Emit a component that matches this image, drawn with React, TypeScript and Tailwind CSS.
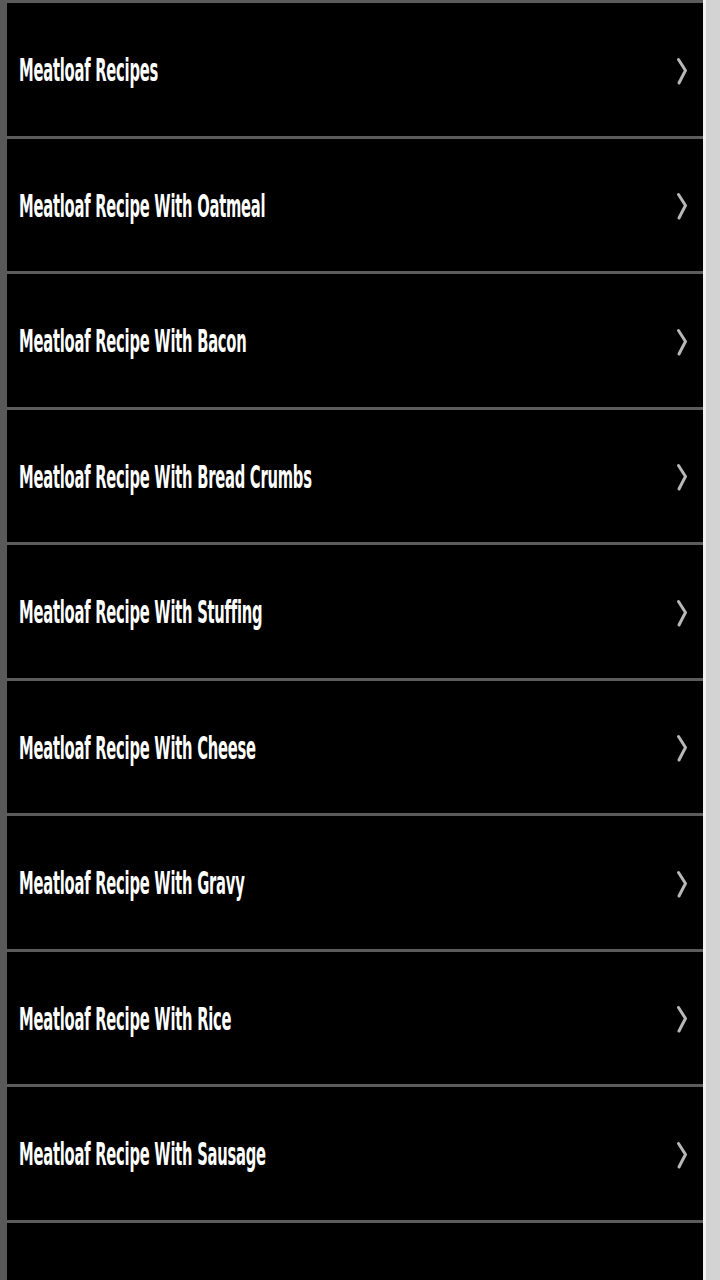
const items = [
  "Meatloaf Recipes",
  "Meatloaf Recipe With Oatmeal",
  "Meatloaf Recipe With Bacon",
  "Meatloaf Recipe With Bread Crumbs",
  "Meatloaf Recipe With Stuffing",
  "Meatloaf Recipe With Cheese",
  "Meatloaf Recipe With Gravy",
  "Meatloaf Recipe With Rice",
  "Meatloaf Recipe With Sausage",
];

function Chevron() {
  return (
    <svg width="12" height="30" viewBox="0 0 12 30" className="mt-[3px] shrink-0">
      <path
        d="M2.5 3.5 Q6 9 9.5 14.5 Q6 21 3 27"
        fill="none"
        stroke="#b8b8b8"
        strokeWidth="3"
        strokeLinecap="round"
        strokeLinejoin="round"
      />
    </svg>
  );
}

export default function App() {
  return (
    <div className="flex h-[1280px] w-[720px] overflow-hidden bg-black">
      <div className="w-[7px] shrink-0 bg-[#595959]" />
      <div className="flex-1 border-t-[3px] border-[#5c5c5c]">
        {items.map((label) => (
          <div
            key={label}
            className="flex h-[135.5px] items-center justify-between border-b-[3px] border-[#5c5c5c] pl-[12px] pr-[15px]"
          >
            <span
              className="mt-[5px] inline-block origin-left scale-x-[0.78] scale-y-[1.55] whitespace-nowrap text-[21px] font-bold text-white"
              style={{ fontFamily: '"DejaVu Sans Condensed", "DejaVu Sans", sans-serif', letterSpacing: "-0.3px" }}
            >
              {label}
            </span>
            <Chevron />
          </div>
        ))}
      </div>
      <div className="w-[3px] shrink-0 bg-[#f2f2f2]" />
      <div className="w-[14px] shrink-0 bg-[#d3d3d3]" />
    </div>
  );
}
